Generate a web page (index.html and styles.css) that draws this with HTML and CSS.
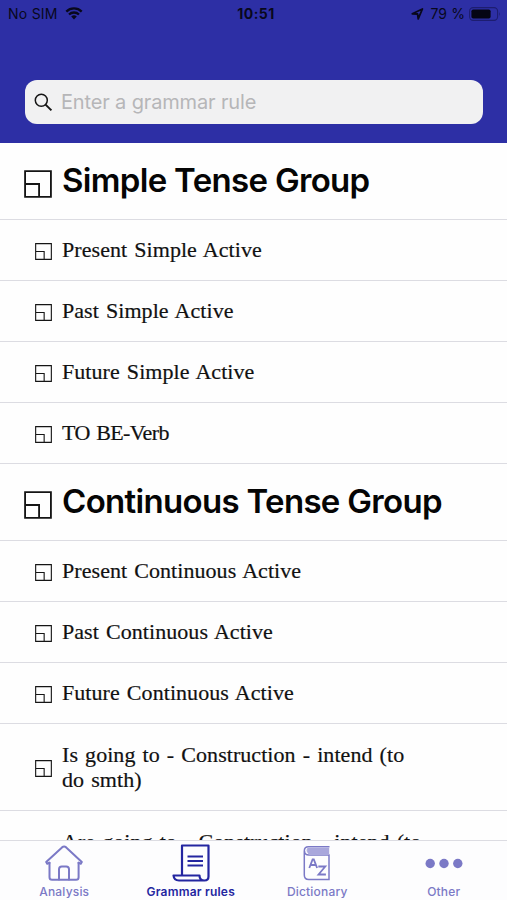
FILE: index.html
```html
<!DOCTYPE html>
<html lang="en">
<head>
    <meta charset="UTF-8">
    <meta name="viewport" content="width=device-width, initial-scale=1.0">
    <title>Grammar rules</title>
    <link rel="stylesheet" href="styles.css">
</head>
<body>
    <svg class="symbols">
        <symbol id="rule-icon" viewBox="0 0 26 26">
            <path d="M1 1h24v24H1zM1 13h13v12"/>
        </symbol>
    </svg>

    <div class="app">
        <header class="header">
            <div class="status-bar">
                <div class="status-left">
                    <span class="carrier">No SIM</span>
                    <svg class="wifi" width="18" height="13" viewBox="0 0 18 13">
                        <path d="M1.3 4.6a11 11 0 0 1 15.4 0M4 7.5a7.2 7.2 0 0 1 10 0" fill="none" stroke="#08081c" stroke-width="2.3"/>
                        <path d="M6.2 9.6a4.2 4.2 0 0 1 5.6 0L9 12.4z" fill="#08081c"/>
                    </svg>
                </div>
                <span class="time">10:51</span>
                <div class="status-right">
                    <svg class="location" width="13" height="12" viewBox="0 0 13 12">
                        <path d="M1.3 5.8L11.4 1 7.2 10.8 6.6 6z" fill="none" stroke="#08081c" stroke-width="1.8" stroke-linejoin="round"/>
                    </svg>
                    <span class="percent">79 %</span>
                    <svg class="battery" width="32" height="14" viewBox="0 0 32 14">
                        <rect x=".6" y=".6" width="28" height="12.8" rx="3.6" fill="none" stroke="#1d1d70" stroke-width="1.1"/>
                        <rect x="2.4" y="2.4" width="19.2" height="9.2" rx="1.8" fill="#050514"/>
                        <path d="M30 4.8q1.6 2.2 0 4.4z" fill="#1d1d70"/>
                    </svg>
                </div>
            </div>
            <div class="search">
                <svg class="search-icon" width="19" height="19" viewBox="0 0 19 19">
                    <circle cx="7.3" cy="7.3" r="6" fill="none" stroke="#161616" stroke-width="1.5"/>
                    <path d="M11.6 11.6l5.8 5.8" stroke="#161616" stroke-width="2"/>
                </svg>
                <input type="text" class="search-input" placeholder="Enter a grammar rule">
            </div>
        </header>

        <main class="rules">
            <h2 class="group"><svg class="icon"><use href="#rule-icon"/></svg><span>Simple Tense Group</span></h2>
            <div class="rule"><svg class="icon"><use href="#rule-icon"/></svg><span>Present Simple Active</span></div>
            <div class="rule"><svg class="icon"><use href="#rule-icon"/></svg><span>Past Simple Active</span></div>
            <div class="rule"><svg class="icon"><use href="#rule-icon"/></svg><span>Future Simple Active</span></div>
            <div class="rule caps"><svg class="icon"><use href="#rule-icon"/></svg><span>TO BE-Verb</span></div>
            <h2 class="group"><svg class="icon"><use href="#rule-icon"/></svg><span>Continuous Tense Group</span></h2>
            <div class="rule"><svg class="icon"><use href="#rule-icon"/></svg><span>Present Continuous Active</span></div>
            <div class="rule"><svg class="icon"><use href="#rule-icon"/></svg><span>Past Continuous Active</span></div>
            <div class="rule"><svg class="icon"><use href="#rule-icon"/></svg><span>Future Continuous Active</span></div>
            <div class="rule tall"><svg class="icon"><use href="#rule-icon"/></svg><span>Is going to - Construction - intend (to<br>do smth)</span></div>
            <div class="rule tall"><svg class="icon"><use href="#rule-icon"/></svg><span>Are going to - Construction - intend (to<br>do smth)</span></div>
        </main>

        <nav class="tabs">
            <a class="tab">
                <svg width="38" height="38" viewBox="0 0 38 38" fill="none" stroke="currentColor" stroke-width="2" stroke-linejoin="round" stroke-linecap="round">
                    <path d="M4.5 18.8L2.2 19.7 1.2 18 17 3.4q2.1-1.7 4.2 0L36.8 18l-1 1.7-2.3-.9"/>
                    <path d="M4.5 18.8v14.4q0 2.6 2.6 2.6h24q2.5 0 2.5-2.6V18.8"/>
                    <path d="M14 35.5V25.3q0-2.8 2.8-2.8h4.4q2.8 0 2.8 2.8v10.2"/>
                </svg>
                <span>Analysis</span>
            </a>
            <a class="tab active">
                <svg width="38" height="38" viewBox="0 0 38 38" fill="none" stroke="currentColor" stroke-width="2.2" stroke-linejoin="round">
                    <path d="M10 31.5V1.5h26.500v31q0 4-4 4H7q-5 0-5.500-5h26q0 5 5 5"/>
                    <path d="M15.500 12.500h15.500M15.500 17h15.500M15.500 21.500h15.500"/>
                </svg>
                <span>Grammar rules</span>
            </a>
            <a class="tab">
                <svg width="38" height="38" viewBox="0 0 38 38" fill="none" stroke="currentColor" stroke-width="1.5">
                    <path d="M31.500 2.800H10.500Q6.300 2.800 6.300 7V31q0 4.500 4.500 4.500h20.200V11H11q-4.500 0-4.500-4"/>
                    <path d="M31 3.500H10q-3.500 3 1 7h20z" fill="#b9b7e4" stroke="none"/>
                    <path d="M9.500 5h22M9.500 7h22M10 9h21.500" stroke-width=".5"/>
                    <path d="M11.300 24l3.300-8.600h1.200l3.300 8.600M12.500 21h5.500M20.300 22.500h7l-6.800 8h7.400" stroke-width="1.800"/>
                </svg>
                <span>Dictionary</span>
            </a>
            <a class="tab">
                <svg width="38" height="38" viewBox="0 0 38 38" fill="currentColor">
                    <circle cx="5.2" cy="19.5" r="4.7"/>
                    <circle cx="19" cy="19.5" r="4.7"/>
                    <circle cx="32.8" cy="19.5" r="4.7"/>
                </svg>
                <span>Other</span>
            </a>
        </nav>
    </div>
</body>
</html>
```
FILE: styles.css
```css
* {
    box-sizing: border-box;
}

body {
    margin: 0;
    background: #fefefe;
    font-family: Inter, "Liberation Sans", sans-serif;
    color: #050505;
}

.symbols {
    display: none;
}

.app {
    display: flex;
    flex-direction: column;
    height: 100vh;
    overflow: hidden;
}

.header {
    flex: none;
    height: 143px;
    background: #2d2fa5;
}

.status-bar {
    display: grid;
    grid-template-columns: 1fr auto 1fr;
    align-items: center;
    height: 27px;
    padding: 0 6px 0 8px;
    font-size: 14px;
    color: #08081c;
}

.status-left,
.status-right {
    display: flex;
    align-items: center;
}

.status-left {
    gap: 7px;
}

.status-right {
    justify-content: flex-end;
    gap: 6px;
}

.carrier {
    letter-spacing: 0.25px;
}

.time {
    padding-left: 3px;
    font-weight: 700;
    letter-spacing: 0.5px;
}

.percent {
    margin-right: -2px;
    letter-spacing: 0.1px;
}

.search {
    display: flex;
    align-items: center;
    height: 44px;
    margin: 53px 24px 0 25px;
    padding-left: 9px;
    background: #f1f1f2;
    border-radius: 12px;
}

.search-icon {
    flex: none;
}

.search-input {
    flex: 1;
    margin-left: 8px;
    padding: 0;
    border: none;
    outline: none;
    background: transparent;
    font-family: inherit;
    font-size: 20px;
    letter-spacing: -0.15px;
}

.search-input::placeholder {
    color: #b6b6b8;
}

.rules {
    flex: 1;
    min-height: 0;
    overflow: hidden;
}

.group,
.rule {
    display: flex;
    align-items: center;
    margin: 0;
    border-bottom: 1px solid #dcdce2;
    white-space: nowrap;
}

.group {
    height: 77px;
    padding-left: 24px;
    font-size: 33px;
    font-weight: 600;
    letter-spacing: -0.68px;
}

.icon {
    flex: none;
    fill: none;
    stroke: #151515;
    stroke-width: 1.7;
}

.group .icon {
    width: 28px;
    height: 28px;
    margin: 5px 10px 0 0;
}

.group span {
    margin-top: -2px;
}

.rule {
    height: 61px;
    padding-left: 35px;
    font-family: "Liberation Serif", serif;
    font-size: 22px;
    line-height: 25px;
    letter-spacing: 0.06px;
    word-spacing: 1.5px;
    color: #111;
    -webkit-text-stroke: 0.2px #111;
}

.rule span {
    margin-top: -1px;
}

.rule .icon {
    width: 17px;
    height: 17px;
    margin: 2px 10px 0 0;
}

.rule.caps {
    letter-spacing: -0.6px;
}

.rule.tall {
    height: 87px;
}

.tabs {
    flex: none;
    display: grid;
    grid-template-columns: repeat(4, 1fr);
    height: 60px;
    padding-left: 1px;
    border-top: 1px solid #dcdce2;
    background: #fdfdfe;
}

.tab {
    display: flex;
    flex-direction: column;
    align-items: center;
    padding-top: 3px;
    font-size: 12px;
    font-weight: 500;
    line-height: 15px;
    letter-spacing: 0.2px;
    color: #7b79c6;
}

.tab span {
    margin-top: 2px;
}

.tab.active {
    color: #2426a0;
    font-weight: 600;
}
```
